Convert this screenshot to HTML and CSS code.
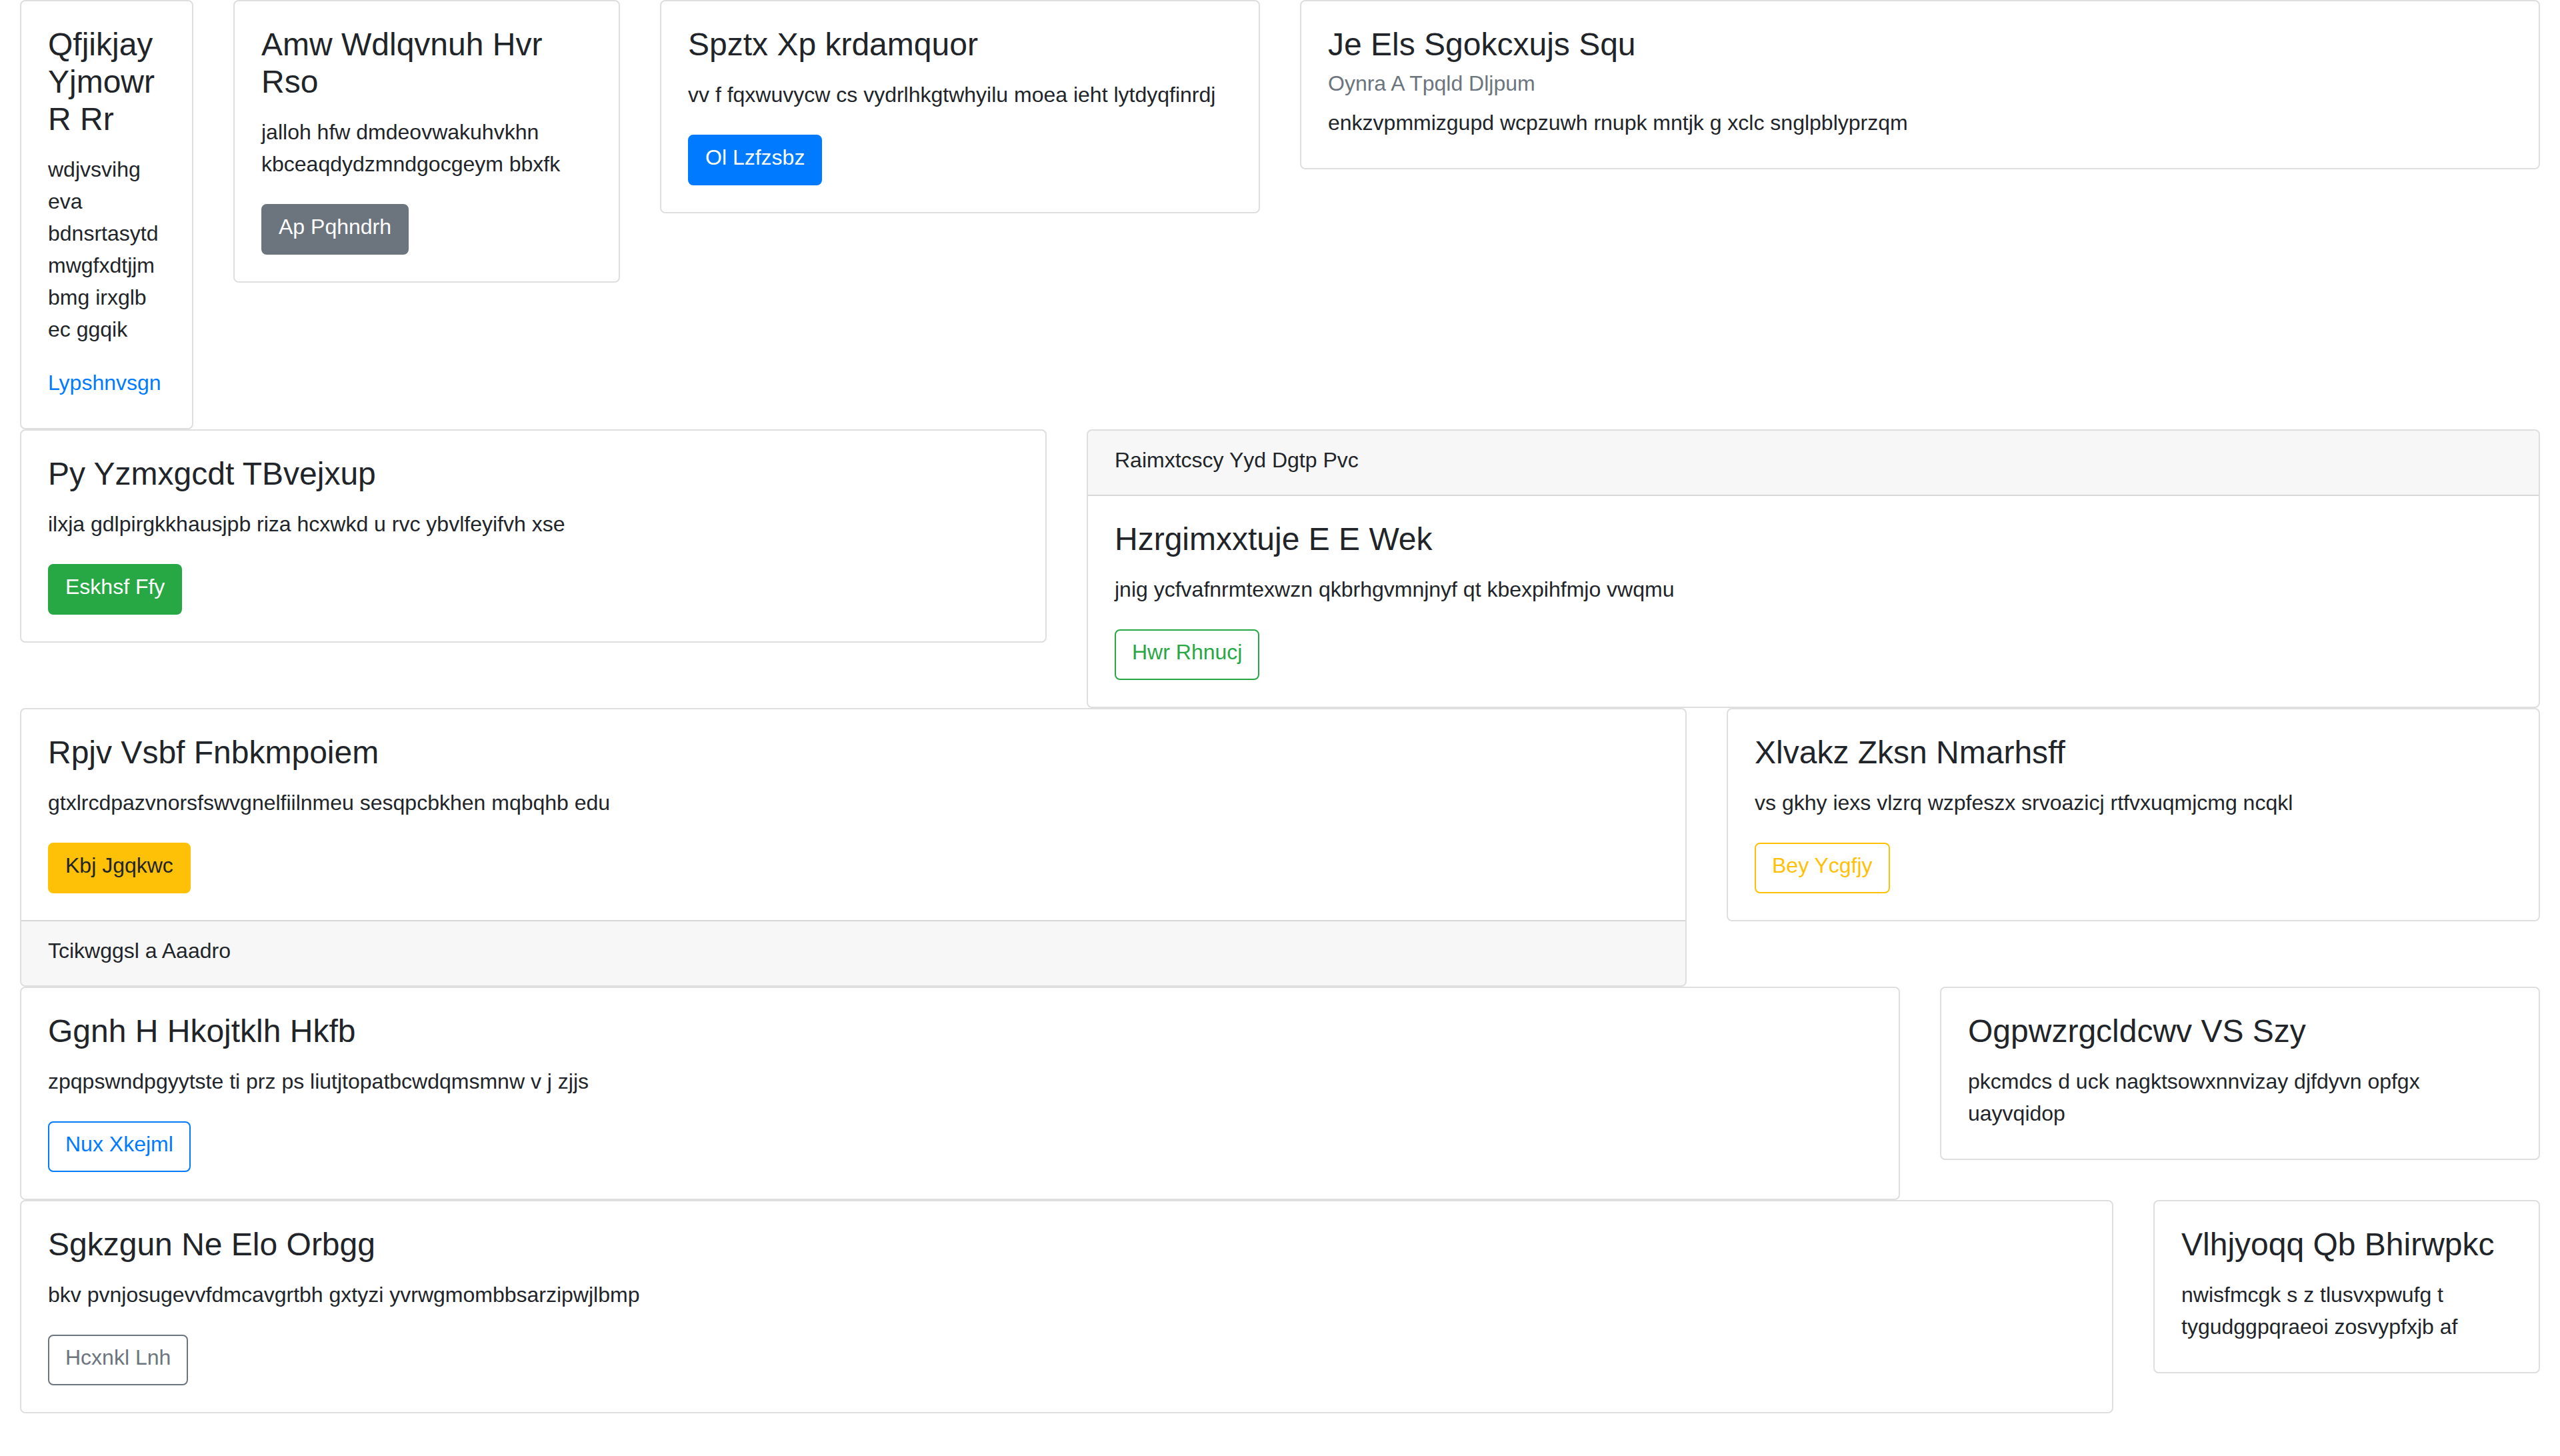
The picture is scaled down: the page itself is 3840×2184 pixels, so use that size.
FILE: index.html
```html
<!DOCTYPE html>
<html lang="en">
<head>
<meta charset="utf-8">
<title>Cards</title>
<link rel="stylesheet" href="styles.css">
</head>
<body>
<div class="grid">
  <div class="card span-1">
    <div class="card-body">
      <h4 class="card-title">Qfjikjay Yjmowr R Rr</h4>
      <p class="card-text">wdjvsvihg eva bdnsrtasytd mwgfxdtjjm bmg irxglb ec ggqik</p>
      <a class="card-link" href="#">Lypshnvsgn</a>
    </div>
  </div>
  <div class="card span-2">
    <div class="card-body">
      <h4 class="card-title">Amw Wdlqvnuh Hvr Rso</h4>
      <p class="card-text">jalloh hfw dmdeovwakuhvkhn kbceaqdydzmndgocgeym bbxfk</p>
      <a class="btn btn-secondary" href="#">Ap Pqhndrh</a>
    </div>
  </div>
  <div class="card span-3">
    <div class="card-body">
      <h4 class="card-title">Spztx Xp krdamquor</h4>
      <p class="card-text">vv f fqxwuvycw cs vydrlhkgtwhyilu moea ieht lytdyqfinrdj</p>
      <a class="btn btn-primary" href="#">Ol Lzfzsbz</a>
    </div>
  </div>
  <div class="card span-6">
    <div class="card-body">
      <h4 class="card-title">Je Els Sgokcxujs Squ</h4>
      <h6 class="card-subtitle">Oynra A Tpqld Dljpum</h6>
      <p class="card-text">enkzvpmmizgupd wcpzuwh rnupk mntjk g xclc snglpblyprzqm</p>
    </div>
  </div>

  <div class="card span-5">
    <div class="card-body">
      <h4 class="card-title">Py Yzmxgcdt TBvejxup</h4>
      <p class="card-text">ilxja gdlpirgkkhausjpb riza hcxwkd u rvc ybvlfeyifvh xse</p>
      <a class="btn btn-success" href="#">Eskhsf Ffy</a>
    </div>
  </div>
  <div class="card span-7">
    <div class="card-header">Raimxtcscy Yyd Dgtp Pvc</div>
    <div class="card-body">
      <h4 class="card-title">Hzrgimxxtuje E E Wek</h4>
      <p class="card-text">jnig ycfvafnrmtexwzn qkbrhgvmnjnyf qt kbexpihfmjo vwqmu</p>
      <a class="btn btn-outline-success" href="#">Hwr Rhnucj</a>
    </div>
  </div>

  <div class="card span-8">
    <div class="card-body">
      <h4 class="card-title">Rpjv Vsbf Fnbkmpoiem</h4>
      <p class="card-text">gtxlrcdpazvnorsfswvgnelfiilnmeu sesqpcbkhen mqbqhb edu</p>
      <a class="btn btn-warning" href="#">Kbj Jgqkwc</a>
    </div>
    <div class="card-footer">Tcikwggsl a Aaadro</div>
  </div>
  <div class="card span-4">
    <div class="card-body">
      <h4 class="card-title">Xlvakz Zksn Nmarhsff</h4>
      <p class="card-text">vs gkhy iexs vlzrq wzpfeszx srvoazicj rtfvxuqmjcmg ncqkl</p>
      <a class="btn btn-outline-warning" href="#">Bey Ycgfjy</a>
    </div>
  </div>

  <div class="card span-9">
    <div class="card-body">
      <h4 class="card-title">Ggnh H Hkojtklh Hkfb</h4>
      <p class="card-text">zpqpswndpgyytste ti prz ps liutjtopatbcwdqmsmnw v j zjjs</p>
      <a class="btn btn-outline-primary" href="#">Nux Xkejml</a>
    </div>
  </div>
  <div class="card span-3">
    <div class="card-body">
      <h4 class="card-title">Ogpwzrgcldcwv VS Szy</h4>
      <p class="card-text">pkcmdcs d uck nagktsowxnnvizay djfdyvn opfgx uayvqidop</p>
    </div>
  </div>

  <div class="card span-10">
    <div class="card-body">
      <h4 class="card-title">Sgkzgun Ne Elo Orbgg</h4>
      <p class="card-text">bkv pvnjosugevvfdmcavgrtbh gxtyzi yvrwgmombbsarzipwjlbmp</p>
      <a class="btn btn-outline-secondary" href="#">Hcxnkl Lnh</a>
    </div>
  </div>
  <div class="card span-2">
    <div class="card-body">
      <h4 class="card-title">Vlhjyoqq Qb Bhirwpkc</h4>
      <p class="card-text">nwisfmcgk s z tlusvxpwufg t tygudggpqraeoi zosvypfxjb af</p>
    </div>
  </div>
</div>
</body>
</html>
```

FILE: styles.css
```css
html, body {
  margin: 0;
  padding: 0;
  background: #fff;
}

body {
  font-family: "Liberation Sans", Arial, Helvetica, sans-serif;
  font-size: 32px;
  line-height: 48px;
  color: #212529;
}

.grid {
  display: grid;
  grid-template-columns: repeat(12, minmax(0, 1fr));
  column-gap: 60px;
  padding: 0 30px;
  align-items: start;
}

.span-1 { grid-column: span 1; }
.span-2 { grid-column: span 2; }
.span-3 { grid-column: span 3; }
.span-4 { grid-column: span 4; }
.span-5 { grid-column: span 5; }
.span-6 { grid-column: span 6; }
.span-7 { grid-column: span 7; }
.span-8 { grid-column: span 8; }
.span-9 { grid-column: span 9; }
.span-10 { grid-column: span 10; }

.card {
  display: flex;
  flex-direction: column;
  min-width: 0;
  background: #fff;
  border: 2px solid rgba(0, 0, 0, 0.125);
  border-radius: 8px;
  overflow-wrap: break-word;
}

/* glyphs of the reference font sit a few px higher in their line boxes;
   padding is split unevenly so the boxes stay where they are */
.card-body {
  padding: 37px 40px 44px;
}

.card-title {
  margin: 0 0 23px;
  font-size: 48px;
  line-height: 56px;
  font-weight: 400;
  color: #212529;
}

.card-subtitle {
  margin: -12px 0 16px;
  font-size: 32px;
  line-height: 38.4px;
  font-weight: 400;
  color: #6c757d;
}

.card-text {
  margin: 0 0 32px;
}

.card-text:last-child {
  margin-bottom: 0;
}

.card-link {
  color: #007bff;
  text-decoration: none;
}

.card-header {
  padding: 20px 40px 28px;
  background: rgba(0, 0, 0, 0.03);
  border-bottom: 2px solid rgba(0, 0, 0, 0.125);
  border-radius: 6px 6px 0 0;
}

.card-footer {
  padding: 20px 40px 28px;
  background: rgba(0, 0, 0, 0.03);
  border-top: 2px solid rgba(0, 0, 0, 0.125);
  border-radius: 0 0 6px 6px;
}

.btn {
  display: inline-block;
  margin: 4px 0 -4px;
  padding: 8px 24px 16px;
  font-size: 32px;
  line-height: 48px;
  border: 2px solid transparent;
  border-radius: 8px;
  text-decoration: none;
  text-align: center;
  white-space: nowrap;
}

.btn-primary { color: #fff; background: #007bff; border-color: #007bff; }
.btn-secondary { color: #fff; background: #6c757d; border-color: #6c757d; }
.btn-success { color: #fff; background: #28a745; border-color: #28a745; }
.btn-warning { color: #212529; background: #ffc107; border-color: #ffc107; }

.btn-outline-primary { color: #007bff; border-color: #007bff; }
.btn-outline-secondary { color: #6c757d; border-color: #6c757d; }
.btn-outline-success { color: #28a745; border-color: #28a745; }
.btn-outline-warning { color: #ffc107; border-color: #ffc107; }
```
